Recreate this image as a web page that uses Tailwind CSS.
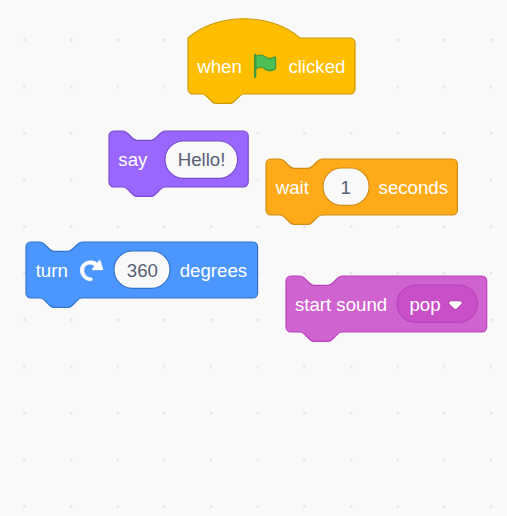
<!DOCTYPE html>
<html lang="en">
<head>
<meta charset="utf-8">
<title>Blocks workspace</title>
<script src="https://cdn.jsdelivr.net/npm/@tailwindcss/browser@4"></script>
</head>
<body class="bg-[#f9f9f9]">
<main class="relative w-[507px] h-[516px] overflow-hidden bg-[#f9f9f9] font-['Liberation_Sans',Arial,sans-serif] text-[18.66px] leading-none text-white whitespace-nowrap">
  <!-- workspace grid -->
  <svg class="absolute inset-0 w-full h-full">
    <defs><pattern id="grid" x="23.3" y="38.8" width="46.656" height="46.656" patternUnits="userSpaceOnUse"><rect width="2.33" height="2.33" fill="#e3e3e3"/></pattern></defs>
    <rect width="507" height="516" fill="url(#grid)"/>
  </svg>

  <!-- when flag clicked -->
  <section class="absolute left-[187.7px] top-[38px] w-[167.1px] h-[56px]">
    <svg class="absolute inset-0 w-full h-full overflow-visible"><path transform="scale(1.1664)" fill="#FFBF00" stroke="#CC9900" d="M0 0c25-22 71-22 96 0H139.2a4 4 0 0 1 4 4v40a4 4 0 0 1-4 4H48c-2 0-3 1-4 2l-4 4c-1 1-2 2-4 2h-12c-2 0-3-1-4-2l-4-4c-1-1-2-2-4-2H4a4 4 0 0 1-4-4z"/></svg>
    <div class="relative flex h-full items-center gap-[9.3px] pl-[9.5px]">
      <span class="pt-[2.6px]">when</span>
      <svg class="w-[28px] h-[28px] shrink-0" viewBox="0 0 24 24"><path fill="#45993D" d="M20.800 3.700c-.4-.2-.9-.1-1.200.2-2 1.600-4.800 1.600-6.800 0-2.300-1.900-5.600-2.300-8.300-1v-.4c0-.6-.5-1-1-1s-1 .4-1 1v18.800c0 .5.5 1 1 1h.1c.5 0 1-.5 1-1v-6.400c1-.7 2.100-1.200 3.400-1.300 1.200 0 2.400.4 3.400 1.200 2.900 2.300 7 2.300 9.800 0 .3-.2.4-.5.4-.9V4.700c0-.5-.3-.9-.8-1z"/><path fill="#4CBF56" d="M20.500 13.800c-2.500 2-6 2-8.500 0C10 12.300 6.900 12.100 4.600 13.500V3.900c2.500-1.300 5.400-1 7.500.8 2.500 2 5.900 2 8.400 0z"/></svg>
      <span class="pt-[2.6px]">clicked</span>
    </div>
  </section>

  <!-- say -->
  <section class="absolute left-[109px] top-[131.4px] w-[139.200px] h-[56px]">
    <svg class="absolute inset-0 w-full h-full overflow-visible"><path transform="scale(1.1664)" fill="#9966FF" stroke="#774DCB" d="M0 4A4 4 0 0 1 4 0H12c2 0 3 1 4 2l4 4c1 1 2 2 4 2h12c2 0 3-1 4-2l4-4c1-1 2-2 4-2H115.340a4 4 0 0 1 4 4v40a4 4 0 0 1-4 4H48c-2 0-3 1-4 2l-4 4c-1 1-2 2-4 2h-12c-2 0-3-1-4-2l-4-4c-1-1-2-2-4-2H4a4 4 0 0 1-4-4z"/></svg>
    <div class="relative flex h-full items-center pl-[9.3px]">
      <span class="w-[47px] pt-[2.6px]">say</span>
      <div class="relative flex items-center justify-center w-[72.6px] h-[37.3px] text-[#575E75]">
        <svg class="absolute inset-0 w-full h-full overflow-visible"><rect width="72.6" height="37.3" rx="18.66" fill="#f9f9f9" stroke="#774DCB" stroke-width="1.166"/></svg>
        <span class="relative pt-[2.6px]">Hello!</span>
      </div>
    </div>
  </section>

  <!-- wait -->
  <section class="absolute left-[266.4px] top-[158.9px] w-[191.400px] h-[56px]">
    <svg class="absolute inset-0 w-full h-full overflow-visible"><path transform="scale(1.1664)" fill="#FFAB19" stroke="#CF8B17" d="M0 4A4 4 0 0 1 4 0H12c2 0 3 1 4 2l4 4c1 1 2 2 4 2h12c2 0 3-1 4-2l4-4c1-1 2-2 4-2H160.100a4 4 0 0 1 4 4v40a4 4 0 0 1-4 4H48c-2 0-3 1-4 2l-4 4c-1 1-2 2-4 2h-12c-2 0-3-1-4-2l-4-4c-1-1-2-2-4-2H4a4 4 0 0 1-4-4z"/></svg>
    <div class="relative flex h-full items-center pl-[9.3px]">
      <span class="w-[47px] pt-[2.6px]">wait</span>
      <div class="relative flex items-center justify-center w-[46.100px] h-[37.3px] mr-[9.8px] text-[#575E75]">
        <svg class="absolute inset-0 w-full h-full overflow-visible"><rect width="46.1" height="37.3" rx="18.66" fill="#f9f9f9" stroke="#CF8B17" stroke-width="1.166"/></svg>
        <span class="relative pt-[2.6px]">1</span>
      </div>
      <span class="pt-[2.6px]">seconds</span>
    </div>
  </section>

  <!-- turn -->
  <section class="absolute left-[25.900px] top-[241.8px] w-[231.600px] h-[56px]">
    <svg class="absolute inset-0 w-full h-full overflow-visible"><path transform="scale(1.1664)" fill="#4C97FF" stroke="#3373CC" d="M0 4A4 4 0 0 1 4 0H12c2 0 3 1 4 2l4 4c1 1 2 2 4 2h12c2 0 3-1 4-2l4-4c1-1 2-2 4-2H194.560a4 4 0 0 1 4 4v40a4 4 0 0 1-4 4H48c-2 0-3 1-4 2l-4 4c-1 1-2 2-4 2h-12c-2 0-3-1-4-2l-4-4c-1-1-2-2-4-2H4a4 4 0 0 1-4-4z"/></svg>
    <div class="relative flex h-full items-center gap-[9.3px] pl-[9.8px]">
      <span class="pt-[2.6px]">turn</span>
      <svg class="w-[28px] h-[28px] shrink-0" viewBox="0 0 24 24"><path fill="#fff" stroke="#fff" stroke-width=".3" stroke-linejoin="round" d="M21.700 11.950H13.600a.59.59 0 0 1-.43-1l1.850-2.250a5.900 5.900 0 0 0-4.630-1.640 5.070 5.070 0 0 0-4.110 3.170A6 6 0 0 0 7 15.770a6.510 6.510 0 0 0 5 2.920 1.310 1.310 0 0 1-.08 2.620 9.300 9.300 0 0 1-7.350-3.820A9.160 9.160 0 0 1 3.170 9.120 8.510 8.510 0 0 1 5.710 6 8.760 8.760 0 0 1 9.420 4.200a9.640 9.640 0 0 1 7.900 1.640l1.680-1.990a.6.6 0 0 1 1.060.22l2.200 7.140a.58.58 0 0 1-.56.740z"/></svg>
      <div class="relative flex items-center justify-center w-[56px] h-[37.3px] text-[#575E75]">
        <svg class="absolute inset-0 w-full h-full overflow-visible"><rect width="56" height="37.3" rx="18.66" fill="#f9f9f9" stroke="#3373CC" stroke-width="1.166"/></svg>
        <span class="relative pt-[2.6px]">360</span>
      </div>
      <span class="pt-[2.6px]">degrees</span>
    </div>
  </section>

  <!-- start sound -->
  <section class="absolute left-[285.600px] top-[275.900px] w-[200.700px] h-[56px]">
    <svg class="absolute inset-0 w-full h-full overflow-visible"><path transform="scale(1.1664)" fill="#CF63CF" stroke="#BD42BD" d="M0 4A4 4 0 0 1 4 0H12c2 0 3 1 4 2l4 4c1 1 2 2 4 2h12c2 0 3-1 4-2l4-4c1-1 2-2 4-2H168.070a4 4 0 0 1 4 4v40a4 4 0 0 1-4 4H48c-2 0-3 1-4 2l-4 4c-1 1-2 2-4 2h-12c-2 0-3-1-4-2l-4-4c-1-1-2-2-4-2H4a4 4 0 0 1-4-4z"/></svg>
    <div class="relative flex h-full items-center gap-[9.3px] pl-[9.3px]">
      <span class="pt-[2.6px]">start sound</span>
      <div class="relative flex items-center w-[80.4px] h-[37.3px] pl-[12.9px] gap-[7.8px]">
        <svg class="absolute inset-0 w-full h-full overflow-visible"><rect width="80.4" height="37.3" rx="18.66" fill="#C94FC9" stroke="#BD42BD" stroke-width="1.166"/></svg>
        <span class="relative pt-[2.6px]">pop</span>
        <svg class="relative top-[0.8px] w-[14.82px] h-[10.25px]" viewBox="0 0 12.71 8.79"><path fill="#231F20" fill-opacity=".1" d="M12.710 2.440A2.410 2.410 0 0 1 12 4.160L8.080 8.080a2.450 2.450 0 0 1-3.450 0L.72 4.160A2.420 2.420 0 0 1 0 2.440 2.480 2.480 0 0 1 .71.71C1 .47 1.430 0 6.360 0S11.750.46 12 .71a2.440 2.440 0 0 1 .71 1.730z"/><path fill="#fff" d="M6.360 7.790a1.430 1.430 0 0 1-1-.42L1.420 3.450a1.440 1.440 0 0 1 0-2c.56-.56 9.310-.56 9.870 0a1.440 1.440 0 0 1 0 2L7.370 7.370a1.430 1.430 0 0 1-1.010.42z"/></svg>
      </div>
    </div>
  </section>
</main>
</body>
</html>
